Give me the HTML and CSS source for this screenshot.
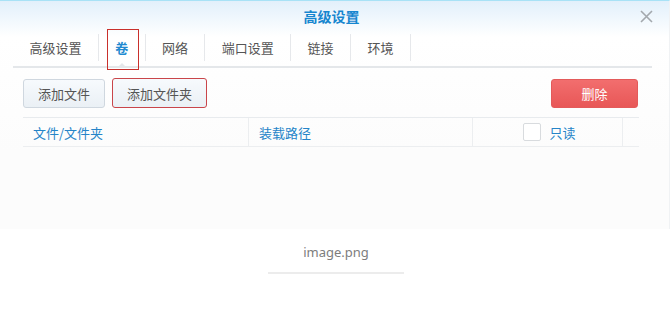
FILE: index.html
```html
<!DOCTYPE html>
<html lang="zh-CN">
<head>
    <meta charset="UTF-8">
    <title>高级设置</title>
    <link rel="stylesheet" href="styles.css">
</head>
<body>

<div class="dialog">
    <div class="titlebar">
        <span class="title">高级设置</span>
        <svg class="close" width="13" height="13" viewBox="0 0 13 13">
            <path d="M1 1 L12 12 M12 1 L1 12" stroke="#a3a8ad" stroke-width="1.6" fill="none"/>
        </svg>
    </div>

    <div class="tabs">
        <div class="tab">高级设置</div>
        <div class="tab active">卷<span class="mark"></span></div>
        <div class="tab">网络</div>
        <div class="tab">端口设置</div>
        <div class="tab">链接</div>
        <div class="tab">环境</div>
    </div>

    <div class="toolbar">
        <button class="btn">添加文件</button>
        <button class="btn marked">添加文件夹</button>
        <button class="btn danger">删除</button>
    </div>

    <div class="grid-head">
        <div class="col col-file">文件/文件夹</div>
        <div class="col col-path">装载路径</div>
        <div class="col col-ro"><span class="checkbox"></span>只读</div>
        <div class="col col-end"></div>
    </div>
</div>

<div class="caption">
    <span>image.png</span>
</div>

</body>
</html>
```

FILE: styles.css
```css
body {
    margin: 0;
    font-family: "Noto Sans CJK SC", "Microsoft YaHei", sans-serif;
    font-size: 13px;
    color: #555;
    background-color: #ffffff;
}

.dialog {
    height: 229px;
    box-sizing: border-box;
    border-top: 1px solid #a8e2f6;
    border-right: 1px solid #f0f2f4;
    margin-right: 2px;
    background: linear-gradient(to bottom, #e2f0fb 0px, #ffffff 36px, #fcfcfc 150px);
}

.titlebar {
    height: 31px;
    display: flex;
    align-items: center;
    justify-content: center;
    position: relative;
    padding-right: 6px;
}

.title {
    color: #1686cf;
    font-size: 14px;
    font-weight: bold;
    margin-top: -2px;
}

.close {
    position: absolute;
    right: 16px;
    top: 9px;
}

.tabs {
    display: flex;
    margin: 1px 17px 0 13px;
    padding-top: 1px;
    padding-bottom: 5px;
    border-bottom: 2px solid #e4e7ea;
}

.tab {
    position: relative;
    height: 27px;
    line-height: 27px;
    padding: 0 16.4px;
    border-right: 1px solid #e6e8eb;
    color: #555;
}

.tab.active {
    color: #2189d0;
    font-weight: bold;
}

/* small caret under the active tab */
.tab.active::after {
    content: "";
    position: absolute;
    left: 50%;
    bottom: -7px;
    margin-left: -5px;
    border-left: 5px solid transparent;
    border-right: 5px solid transparent;
    border-bottom: 5px solid #e4e7ea;
}

.tab .mark {
    position: absolute;
    left: 8px;
    right: 6px;
    top: -5px;
    bottom: -9px;
    border: 1px solid #c9302c;
}

.toolbar {
    display: flex;
    gap: 7px;
    margin: 11px 30px 0 23px;
    padding-bottom: 9px;
    border-bottom: 1px solid #e8ebee;
}

.btn {
    height: 29px;
    padding: 0 14px;
    font-family: inherit;
    font-size: 13px;
    color: #555;
    background: linear-gradient(to bottom, #f7fafd, #eaf0f5);
    border: 1px solid #cfd7df;
    border-radius: 3px;
}

.btn.marked {
    height: 30px;
    margin-top: -1px;
    border-color: #c9454a;
}

.btn.danger {
    margin-left: auto;
    margin-right: 1px;
    width: 87px;
    color: #fff;
    background: linear-gradient(to bottom, #f26e6e, #e85757);
    border-color: #e35a5a;
}

.grid-head {
    display: flex;
    height: 28px;
    margin: 0 30px 0 23px;
    border-bottom: 1px solid #eceef0;
    color: #2584c8;
}

.col {
    display: flex;
    align-items: center;
    border-right: 1px solid #eceef0;
}

.col-file {
    width: 215px;
    padding-left: 10px;
}

.col-path {
    width: 213px;
    padding-left: 10px;
}

.col-ro {
    width: 150px;
    justify-content: center;
    gap: 8px;
    padding-left: 4px;
    box-sizing: border-box;
}

.col-end {
    flex: 1;
    border-right: none;
}

.checkbox {
    width: 16px;
    height: 16px;
    border: 1px solid #d8dbde;
    border-radius: 2px;
    background: #fff;
}

.caption {
    display: flex;
    flex-direction: column;
    align-items: center;
    padding-top: 14px;
}

.caption span {
    width: 136px;
    text-align: center;
    font-family: "Noto Sans", sans-serif;
    font-size: 13px;
    color: #7d7d7d;
    padding-bottom: 11px;
    border-bottom: 2px solid #ececec;
}
```
